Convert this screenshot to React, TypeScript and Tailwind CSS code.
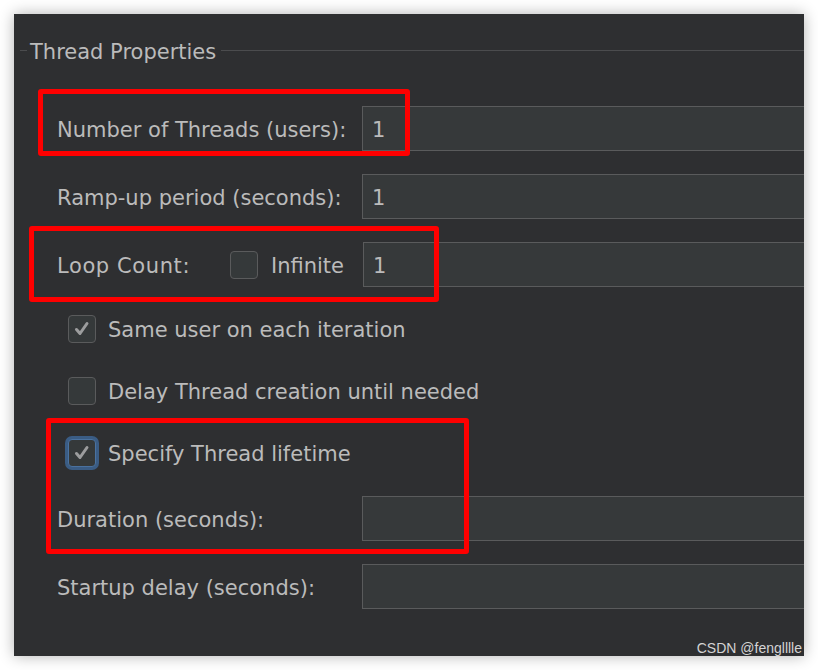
const font = { fontFamily: '"DejaVu Sans", "Liberation Sans", sans-serif' };

function Field({ value }: { value?: string }) {
  return (
    <div className="w-[460px] h-[45px] shrink-0 bg-[#36393a] border border-[#5a5b5c] flex items-center pl-[9px] pt-[4px] text-[21px] text-[#bbbbbb]">
      {value}
    </div>
  );
}

function Check({ checked, focused }: { checked?: boolean; focused?: boolean }) {
  return (
    <div
      className={`w-[28px] h-[28px] shrink-0 rounded-[4px] bg-[#35393a] border flex items-center justify-center ${
        focused ? 'border-[#4a72a0] ring-[3px] ring-[#3a5c84]' : 'border-[#5a5b5c]'
      }`}
    >
      {checked && (
        <svg width="18" height="18" viewBox="0 0 18 18">
          <path d="M3.5 9.5 L7 13.5 L14 3.5" fill="none" stroke="#9c9d9e" strokeWidth="3" strokeLinecap="round" strokeLinejoin="round" />
        </svg>
      )}
    </div>
  );
}

function FieldRow({ label, value, mt }: { label: string; value?: string; mt: string }) {
  return (
    <div className={`flex items-center h-[45px] ${mt}`}>
      <div className="w-[305px] shrink-0 pt-[4px]">{label}</div>
      <Field value={value} />
    </div>
  );
}

function CheckRow({ label, checked, focused, mt }: { label: string; checked?: boolean; focused?: boolean; mt: string }) {
  return (
    <div className={`flex items-center h-[28px] pl-[11px] gap-[12px] ${mt}`}>
      <Check checked={checked} focused={focused} />
      <span className="pt-[3px]">{label}</span>
    </div>
  );
}

export default function App() {
  return (
    <div className="w-[818px] h-[670px] bg-white pt-[14px] pl-[14px] overflow-hidden" style={font}>
      <div className="relative w-[790px] h-[642px] bg-[#2e2f31] overflow-hidden shadow-[0_0_14px_rgba(0,0,0,0.3)] text-[21px] text-[#bbbbbb] leading-none">
        {/* titled border */}
        <div className="flex items-center h-[22px] mt-[25px] pl-[6px]">
          <div className="w-[7px] h-px bg-[#4b4c4e]" />
          <span className="ml-[3px] pt-[4px]">Thread Properties</span>
          <div className="flex-1 h-px bg-[#4b4c4e] ml-[5px]" />
        </div>

        <div className="flex flex-col pl-[43px]">
          <FieldRow label="Number of Threads (users):" value="1" mt="mt-[45px]" />
          <FieldRow label="Ramp-up period (seconds):" value="1" mt="mt-[23px]" />
          <div className="flex items-center h-[45px] mt-[23px]">
            <div className="w-[173px] shrink-0 pt-[4px] tracking-[0.6px]">Loop Count:</div>
            <Check />
            <span className="ml-[13px] w-[92px] shrink-0 pt-[4px]">Infinite</span>
            <Field value="1" />
          </div>
          <CheckRow label="Same user on each iteration" checked mt="mt-[28px]" />
          <CheckRow label="Delay Thread creation until needed" mt="mt-[34px]" />
          <CheckRow label="Specify Thread lifetime" checked focused mt="mt-[34px]" />
          <FieldRow label="Duration (seconds):" mt="mt-[29px]" />
          <FieldRow label="Startup delay (seconds):" mt="mt-[23px]" />
        </div>

        {/* red annotation boxes */}
        <div className="absolute left-[24px] top-[75px] w-[372px] h-[67px] border-[5px] border-[#fe0000] rounded-[3px]" />
        <div className="absolute left-[15px] top-[212px] w-[410px] h-[76px] border-[5px] border-[#fe0000] rounded-[3px]" />
        <div className="absolute left-[32px] top-[404px] w-[423px] h-[136px] border-[5px] border-[#fe0000] rounded-[3px]" />

        <span className="absolute right-[2px] bottom-[1px] text-[14px] leading-none text-[#d4d4d4]" style={{ fontFamily: '"Liberation Sans", sans-serif' }}>
          CSDN @fenglllle
        </span>
      </div>
    </div>
  );
}
